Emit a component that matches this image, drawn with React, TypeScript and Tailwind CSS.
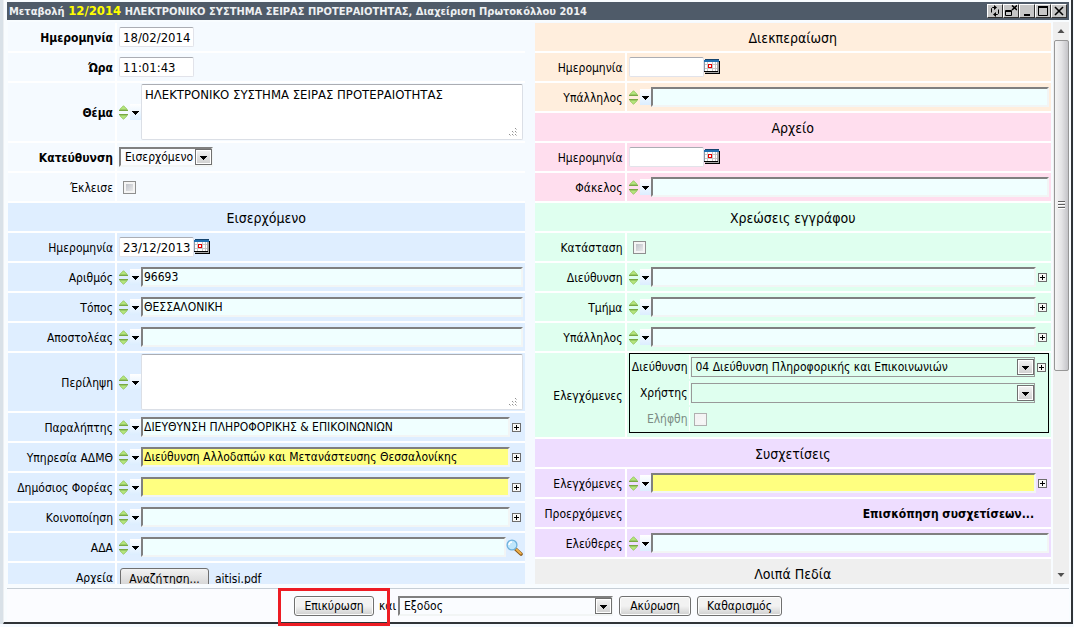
import { useState } from "react";
import type { ReactNode } from "react";
import clsx from "clsx";

type Tone = "plain" | "blue" | "peach" | "pink" | "green" | "violet" | "gray";

const tones: Record<Tone, string> = {
  plain: "bg-[#f5faff]",
  blue: "bg-[#dfeeff]",
  peach: "bg-[#ffeedd]",
  pink: "bg-[#ffdeee]",
  green: "bg-[#dfffef]",
  violet: "bg-[#eeddff]",
  gray: "bg-[#efefef]",
};

/* Icons */

function SpinIcon() {
  return (
    <svg width="9" height="15" viewBox="0 0 9 15" className="shrink-0" aria-hidden="true">
      <path d="M4.5 .7 8.3 4.5H.7Z" fill="#b4e57c" stroke="#8cc152" strokeWidth=".8" />
      <path d="M0 5.5h9M0 9.5h9" stroke="#7aa843" />
      <path d="M4.5 14.3 8.3 10.5H.7Z" fill="#b4e57c" stroke="#8cc152" strokeWidth=".8" />
    </svg>
  );
}

function ArrowDown() {
  return (
    <svg width="7" height="4" viewBox="0 0 7 4" className="shrink-0" aria-hidden="true">
      <path d="M0 0h7v1H6v1H5v1H4v1H3V3H2V2H1V1H0Z" fill="#000" />
    </svg>
  );
}

function CalendarIcon() {
  return (
    <svg width="16" height="16" viewBox="0 0 16 16" shapeRendering="crispEdges" aria-hidden="true">
      <path d="M15 2h1v13h-1zM1 14h15v1H1z" fill="#000" />
      <path d="M13 3h2v10h-2z" fill="#a9a9a9" />
      <path d="M0 12h14v1H0z" fill="#000" />
      <path d="M1 3h12v9H1z" fill="#fff" />
      <path d="M1 13h14v1H1z" fill="#a9a9a9" />
      <path d="M1 0h14v1H1z" fill="#16456f" />
      <path d="M0 1h15v2H0z" fill="#1f6fb0" />
      <path d="M0 3h1v9H0z" fill="#8a98a8" />
      <path d="M3 3h1v9H3zM8 3h1v9H8zM11 3h1v9h-1zM1 5h12v1H1zM1 9h12v1H1z" fill="#c9c9c9" />
      <path d="M4 5h4v4H4z" fill="#e60000" />
      <path d="M5 6h2v2H5z" fill="#fff" />
    </svg>
  );
}

function PlusIcon() {
  return (
    <svg width="9" height="9" viewBox="0 0 9 9" aria-hidden="true">
      <rect x=".5" y=".5" width="8" height="8" fill="#f7f7f5" stroke="#6d6d6d" />
      <path d="M2 4.5h5M4.5 2v5" stroke="#000" />
    </svg>
  );
}

function SearchIcon() {
  return (
    <svg width="17" height="17" viewBox="0 0 17 17" aria-hidden="true">
      <path d="m9.5 10 5.5 5" stroke="#8a5a1c" strokeWidth="3.6" strokeLinecap="round" />
      <path d="m10.5 10.5 4.3 4" stroke="#f0b04a" strokeWidth="2" strokeLinecap="round" />
      <circle cx="6" cy="6" r="4.9" fill="#bfe6fb" stroke="#6fb2dc" strokeWidth="1.3" />
      <path d="M3 6a3 3 0 0 1 3-3" stroke="#fff" strokeWidth="1.5" fill="none" />
    </svg>
  );
}

const windowIcons: { name: string; icon: ReactNode }[] = [
  {
    name: "Ανανέωση",
    icon: (
      <>
        <path d="M2.5 7.5v-4l1-1H6M9.5 4.500v4l-1 1H6" fill="none" stroke="#000" />
        <path d="M5 0v5l3-2.500zM7 7v5L4 9.500z" fill="#000" />
      </>
    ),
  },
  {
    name: "Αποσύνδεση",
    icon: (
      <>
        <path d="M.5 5.5h6v5h-6zM0 6.500h7" fill="none" stroke="#000" />
        <path d="m7 .5 5 4.5M12 .5 7 5" stroke="#000" strokeWidth="1.6" />
      </>
    ),
  },
  { name: "Ελαχιστοποίηση", icon: <path d="M3 9h6v2H3z" fill="#000" /> },
  {
    name: "Μεγιστοποίηση",
    icon: (
      <>
        <path d="M1.5 1.5h9v9h-9z" fill="none" stroke="#000" />
        <path d="M1 1h10v2H1z" fill="#000" />
      </>
    ),
  },
  {
    name: "Κλείσιμο",
    icon: <path d="m2 2 8 8M10 2l-8 8" stroke="#000" strokeWidth="1.6" />,
  },
];

/* Controls */

function Spinner({ label }: { label: string }) {
  return (
    <>
      <SpinIcon />
      <button
        type="button"
        aria-label={`Επιλογές: ${label}`}
        className="ml-0.5 flex h-4 w-[11px] shrink-0 items-center justify-center bg-linear-to-b from-white to-[#dceeff] pt-px"
      >
        <ArrowDown />
      </button>
    </>
  );
}

const lookupBox =
  "h-5 min-w-0 flex-1 border-2 border-t-[#808080] border-r-[#f2f5f5] border-b-[#f2f5f5] border-l-[#808080] pl-px outline-none";

const dateBox =
  "h-5 w-[75px] rounded-[2px] border border-[#e2e3ea] border-t-[#abadb3] bg-white pl-[3px] text-[13px] outline-none";

type FieldProps = {
  id: string;
  label: string;
  tone: Tone;
  bold?: boolean;
};

function Row({
  id,
  label,
  tone,
  bold,
  tall,
  children,
}: FieldProps & { tall?: boolean; children: ReactNode }) {
  return (
    <div className={clsx("flex shrink-0 gap-0.5", tall ? "h-[58px]" : "min-h-7")}>
      <label
        htmlFor={id}
        className={clsx(
          "flex shrink-0 items-center justify-end pt-0.5 pr-0.5 whitespace-nowrap",
          tone === "plain" || tone === "blue" ? "w-[107px]" : "w-[90px]",
          bold && "font-bold",
          tones[tone],
        )}
      >
        {label}
      </label>
      <div className={clsx("flex min-w-0 flex-1 items-center px-0.5", tones[tone])}>{children}</div>
    </div>
  );
}

function Heading({ tone, children }: { tone: Tone; children: ReactNode }) {
  return (
    <h2 className={clsx("flex h-7 shrink-0 items-center justify-center pt-0.5 text-sm", tones[tone])}>
      {children}
    </h2>
  );
}

function LookupField({
  value = "",
  yellow,
  plus,
  search,
  ...field
}: FieldProps & { value?: string; yellow?: boolean; plus?: boolean; search?: boolean }) {
  return (
    <Row {...field}>
      <Spinner label={field.label} />
      <input
        id={field.id}
        type="text"
        defaultValue={value}
        className={clsx(lookupBox, yellow ? "bg-[#ffff80]" : "bg-[#f0ffff]")}
      />
      {plus && (
        <button type="button" aria-label="Προσθήκη" className="mx-0.5 shrink-0">
          <PlusIcon />
        </button>
      )}
      {search && (
        <button type="button" aria-label="Αναζήτηση" className="shrink-0">
          <SearchIcon />
        </button>
      )}
    </Row>
  );
}

function DateField({
  value = "",
  picker,
  ...field
}: FieldProps & { value?: string; picker?: boolean }) {
  return (
    <Row {...field}>
      <input id={field.id} type="text" defaultValue={value} className={dateBox} />
      {picker && (
        <button type="button" aria-label="Ημερολόγιο" className="shrink-0">
          <CalendarIcon />
        </button>
      )}
    </Row>
  );
}

function TextField({ value = "", ...field }: FieldProps & { value?: string }) {
  return (
    <Row {...field} tall>
      <Spinner label={field.label} />
      <div className="relative h-14 min-w-0 flex-1">
        <textarea
          id={field.id}
          defaultValue={value}
          className="h-full w-full resize-none rounded-[2px] border border-[#dbdfe6] border-t-[#abadb3] bg-white px-[3px] py-0.5 text-[13px] leading-4 outline-none"
        />
        <svg
          width="8"
          height="8"
          viewBox="0 0 8 8"
          className="pointer-events-none absolute right-1.5 bottom-1"
          aria-hidden="true"
        >
          <path
            d="M6 0h1v1H6zM3 3h1v1H3zM6 3h1v1H6zM0 6h1v1H0zM3 6h1v1H3zM6 6h1v1H6z"
            fill="#909090"
          />
          <path
            d="M7 1h1v1H7zM4 4h1v1H4zM7 4h1v1H7zM1 7h1v1H1zM4 7h1v1H4zM7 7h1v1H7z"
            fill="#c8c8c8"
          />
        </svg>
      </div>
    </Row>
  );
}

function CheckBox({ id, disabled }: { id: string; disabled?: boolean }) {
  const [checked, setChecked] = useState(false);
  return (
    <input
      id={id}
      type="checkbox"
      checked={checked}
      disabled={disabled}
      onChange={(e) => setChecked(e.target.checked)}
      className={clsx(
        "ml-1 size-[13px] appearance-none border bg-linear-to-br inset-ring-2 inset-ring-[#f4f4f4] checked:from-[#3c6ea5] checked:to-[#3c6ea5]",
        disabled
          ? "border-[#b0b0b0] from-[#efefef] to-[#fafafa]"
          : "border-[#8e8f8f] from-[#b4b8c0] to-[#f4f4f4]",
      )}
    />
  );
}

function SelectBox({
  id,
  options,
  className,
  flat,
}: {
  id: string;
  options: string[];
  className?: string;
  flat?: boolean;
}) {
  return (
    <div className={clsx("relative h-5", className)}>
      <select
        id={id}
        className={clsx(
          "h-full w-full appearance-none pl-1 outline-none",
          flat
            ? "border border-[#999] bg-[#dfffef] pr-5"
            : "border-2 border-t-[#808080] border-r-[#f2f5f5] border-b-[#f2f5f5] border-l-[#808080] bg-[#fafcff]",
        )}
      >
        {options.map((option) => (
          <option key={option}>{option}</option>
        ))}
      </select>
      <span className="pointer-events-none absolute top-0.5 right-px bottom-0.5 flex w-[17px] items-center justify-center border border-[#707070] bg-linear-to-b from-[#f4f4f4] to-[#cfcfcf] pt-0.5 inset-ring inset-ring-white">
        <ArrowDown />
      </span>
    </div>
  );
}

function PushButton({ children, className }: { children: ReactNode; className?: string }) {
  return (
    <button
      type="button"
      className={clsx(
        "h-5 shrink-0 rounded-[3px] border border-[#707070] bg-linear-to-b from-[#f2f2f2] from-50% to-[#cfcfcf] text-center leading-4 whitespace-nowrap inset-ring inset-ring-[#fcfcfc]",
        className,
      )}
    >
      {children}
    </button>
  );
}

/* Panels */

function TitleBar() {
  return (
    <header className="mr-0.5 flex h-[18px] shrink-0 items-center justify-between bg-[#4f5b69] px-0.5 text-[11px] font-bold text-[#eef0f2]">
      <h1 className="truncate leading-[18px]">
        Μεταβολή <span className="text-[13px] text-[#ffff00]">12/2014</span> ΗΛΕΚΤΡΟΝΙΚΟ ΣΥΣΤΗΜΑ
        ΣΕΙΡΑΣ ΠΡΟΤΕΡΑΙΟΤΗΤΑΣ, Διαχείριση Πρωτοκόλλου 2014
      </h1>
      <div className="flex shrink-0">
        {windowIcons.map(({ name, icon }) => (
          <button
            key={name}
            type="button"
            aria-label={name}
            className="flex h-3.5 w-4 items-center justify-center border border-t-white border-r-[#303030] border-b-[#303030] border-l-white bg-[#c6c6c6]"
          >
            <svg width="12" height="12" viewBox="0 0 12 12" aria-hidden="true">
              {icon}
            </svg>
          </button>
        ))}
      </div>
    </header>
  );
}

function ChecksPanel() {
  const cell = "flex h-6 w-[59px] shrink-0 items-center justify-end border-r border-white pr-px";
  return (
    <div className="mb-1 flex min-w-0 flex-1 flex-col gap-0.5 border border-black py-px pl-px">
      <div className="flex items-center">
        <label htmlFor="chk-direction" className={cell}>
          Διεύθυνση
        </label>
        <SelectBox
          id="chk-direction"
          flat
          className="ml-px min-w-0 flex-1"
          options={["04 Διεύθυνση Πληροφορικής και Επικοινωνιών"]}
        />
        <button type="button" aria-label="Προσθήκη" className="mx-0.5 shrink-0">
          <PlusIcon />
        </button>
      </div>
      <div className="flex items-center pr-[13px]">
        <label htmlFor="chk-user" className={cell}>
          Χρήστης
        </label>
        <SelectBox id="chk-user" flat className="ml-px min-w-0 flex-1" options={[""]} />
      </div>
      <div className="flex items-center text-[#7c8c84]">
        <label htmlFor="chk-received" className={cell}>
          Ελήφθη
        </label>
        <CheckBox id="chk-received" disabled />
      </div>
    </div>
  );
}

function IncomingColumn() {
  return (
    <section className="flex min-w-0 flex-1 flex-col gap-0.5 bg-white">
      <DateField id="date" label="Ημερομηνία" tone="plain" bold value="18/02/2014" />
      <DateField id="time" label="Ώρα" tone="plain" bold value="11:01:43" />
      <TextField
        id="subject"
        label="Θέμα"
        tone="plain"
        bold
        value="ΗΛΕΚΤΡΟΝΙΚΟ ΣΥΣΤΗΜΑ ΣΕΙΡΑΣ ΠΡΟΤΕΡΑΙΟΤΗΤΑΣ"
      />
      <Row id="direction" label="Κατεύθυνση" tone="plain" bold>
        <SelectBox id="direction" className="w-[94px]" options={["Εισερχόμενο", "Εξερχόμενο"]} />
      </Row>
      <Row id="closed" label="Έκλεισε" tone="plain">
        <CheckBox id="closed" />
      </Row>

      <Heading tone="blue">Εισερχόμενο</Heading>
      <DateField id="in-date" label="Ημερομηνία" tone="blue" value="23/12/2013" picker />
      <LookupField id="in-number" label="Αριθμός" tone="blue" value="96693" />
      <LookupField id="in-place" label="Τόπος" tone="blue" value="ΘΕΣΣΑΛΟΝΙΚΗ" />
      <LookupField id="in-sender" label="Αποστολέας" tone="blue" />
      <TextField id="in-summary" label="Περίληψη" tone="blue" />
      <LookupField
        id="in-recipient"
        label="Παραλήπτης"
        tone="blue"
        value="ΔΙΕΥΘΥΝΣΗ ΠΛΗΡΟΦΟΡΙΚΗΣ & ΕΠΙΚΟΙΝΩΝΙΩΝ"
        plus
      />
      <LookupField
        id="in-service"
        label="Υπηρεσία ΑΔΜΘ"
        tone="blue"
        value="Διεύθυνση Αλλοδαπών και Μετανάστευσης Θεσσαλονίκης"
        yellow
        plus
      />
      <LookupField id="in-agency" label="Δημόσιος Φορέας" tone="blue" yellow plus />
      <LookupField id="in-notify" label="Κοινοποίηση" tone="blue" plus />
      <LookupField id="in-ada" label="ΑΔΑ" tone="blue" search />
      <Row id="in-files" label="Αρχεία" tone="blue">
        <button
          id="in-files"
          type="button"
          className="mt-1 ml-px h-[22px] w-[89px] rounded-[3px] border border-[#707070] bg-linear-to-b from-[#f2f2f2] to-[#cfcfcf]"
        >
          Αναζήτηση...
        </button>
        <span className="mt-1 ml-1.5">aitisi.pdf</span>
      </Row>
    </section>
  );
}

function ProcessingColumn() {
  return (
    <section className="flex min-w-0 flex-1 flex-col gap-0.5 bg-white">
      <Heading tone="peach">Διεκπεραίωση</Heading>
      <DateField id="out-date" label="Ημερομηνία" tone="peach" picker />
      <LookupField id="out-employee" label="Υπάλληλος" tone="peach" />

      <Heading tone="pink">Αρχείο</Heading>
      <DateField id="arc-date" label="Ημερομηνία" tone="pink" picker />
      <LookupField id="arc-folder" label="Φάκελος" tone="pink" />

      <Heading tone="green">Χρεώσεις εγγράφου</Heading>
      <Row id="chg-state" label="Κατάσταση" tone="green">
        <CheckBox id="chg-state" />
      </Row>
      <LookupField id="chg-direction" label="Διεύθυνση" tone="green" plus />
      <LookupField id="chg-section" label="Τμήμα" tone="green" plus />
      <LookupField id="chg-employee" label="Υπάλληλος" tone="green" plus />
      <Row id="chk-direction" label="Ελεγχόμενες" tone="green">
        <ChecksPanel />
      </Row>

      <Heading tone="violet">Συσχετίσεις</Heading>
      <LookupField id="rel-checked" label="Ελεγχόμενες" tone="violet" yellow plus />
      <Row id="rel-overview" label="Προερχόμενες" tone="violet">
        <a id="rel-overview" href="#overview" className="mr-[15px] ml-auto pt-0.5 font-bold">
          Επισκόπηση συσχετίσεων...
        </a>
      </Row>
      <LookupField id="rel-free" label="Ελεύθερες" tone="violet" />

      <Heading tone="gray">Λοιπά Πεδία</Heading>
    </section>
  );
}

function ScrollBar() {
  return (
    <div className="flex w-4 shrink-0 flex-col items-center bg-[#efefef]" aria-hidden="true">
      <svg width="16" height="18" viewBox="0 0 16 18" className="shrink-0">
        <path d="M4.5 11 8 7l3.5 4Z" fill="#505050" />
      </svg>
      <div className="flex w-[15px] flex-[330] items-center justify-center rounded-[2px] border border-[#979797] bg-linear-to-r from-[#f5f5f5] via-[#e4e4e6] to-[#c4c4c8]">
        <svg width="7" height="9" viewBox="0 0 7 9">
          <path d="M0 .5h7M0 3.5h7M0 6.5h7" stroke="#606060" />
          <path d="M0 1.5h7M0 4.5h7M0 7.5h7" stroke="#fff" />
        </svg>
      </div>
      <div className="flex-[196]" />
      <svg width="16" height="18" viewBox="0 0 16 18" className="shrink-0">
        <path d="M4.5 7h7L8 11Z" fill="#505050" />
      </svg>
    </div>
  );
}

function ActionBar() {
  return (
    <footer className="mr-0.5 flex h-[34px] shrink-0 items-center justify-center border-t border-[#c6ced6] bg-[#fbfcff]">
      <div className="relative flex">
        <PushButton className="w-20">Επικύρωση</PushButton>
        <div className="pointer-events-none absolute -top-2 -right-4 -bottom-2.5 -left-4 z-10 border-3 border-[#ed1c24]" />
      </div>
      <label htmlFor="after-action" className="w-6 pl-[5px]">
        και
      </label>
      <SelectBox id="after-action" className="w-[215px]" options={["Εξοδος", "Παραμονή"]} />
      <PushButton className="ml-1.5 w-[72px]">Ακύρωση</PushButton>
      <PushButton className="ml-1.5 w-[85px]">Καθαρισμός</PushButton>
    </footer>
  );
}

export default function App() {
  return (
    <div className="flex h-screen bg-[#f5faff] pr-px pb-[3px] font-['DejaVu_Sans_Condensed','DejaVu_Sans',sans-serif] text-xs text-black">
      <div className="w-[3px] shrink-0 bg-[#d9e1e8]" />
      <form
        className="flex min-w-0 flex-1 flex-col border-r-2 border-b-2 border-l border-[#303438] border-l-[#eceff2] bg-[#f8fcff] pt-0.5 pl-[3px]"
        onSubmit={(e) => e.preventDefault()}
      >
        <TitleBar />
        <main className="mt-0.5 mb-1 flex min-h-0 flex-1 overflow-hidden pr-0.5 pl-px">
          <div className="flex min-w-0 flex-1 items-start gap-2.5 overflow-hidden bg-[#f5faff] pt-px">
            <IncomingColumn />
            <ProcessingColumn />
          </div>
          <div className="ml-0.5 flex">
            <ScrollBar />
          </div>
        </main>
        <ActionBar />
      </form>
    </div>
  );
}
